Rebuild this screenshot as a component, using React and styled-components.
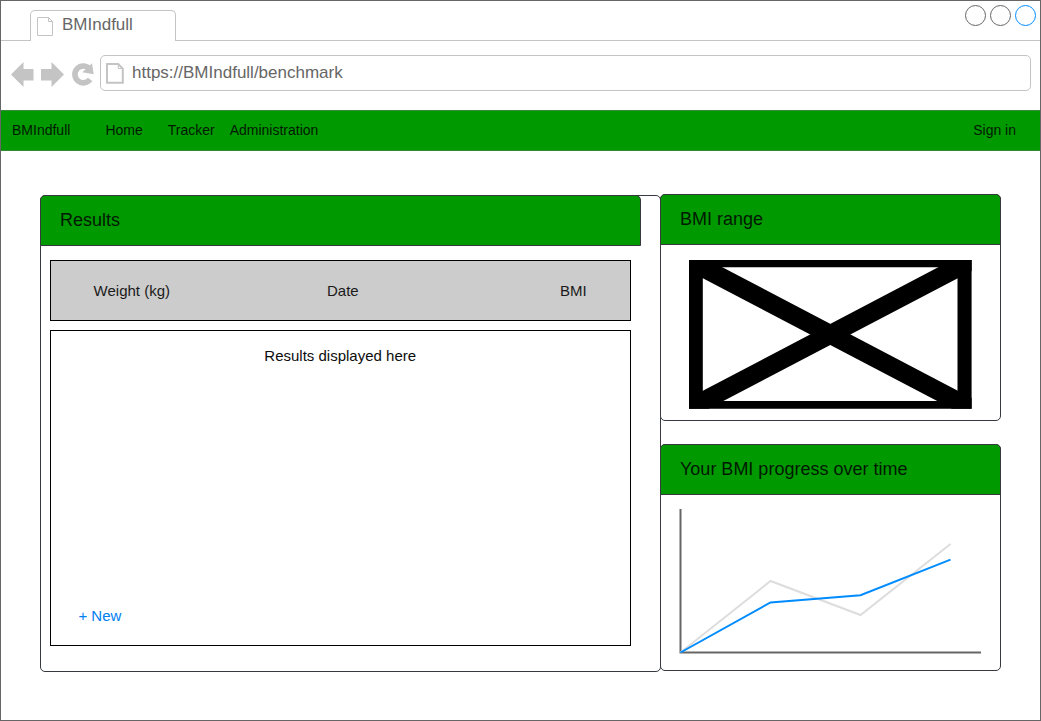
import React from 'react';
import styled, { createGlobalStyle } from 'styled-components';

const GlobalStyle = createGlobalStyle`
  *, *::before, *::after { box-sizing: border-box; }
  body { margin: 0; background: #fff; font-family: "Liberation Sans", Arial, sans-serif; }
  svg { display: block; flex: none; }
`;

const BrowserWindow = styled.div`
  width: 1041px;
  height: 721px;
  border: 1px solid #666;
  background: #fff;
  display: flex;
  flex-direction: column;
  overflow: hidden;
`;

const TabStrip = styled.header`
  height: 40px;
  flex: none;
  display: flex;
  align-items: flex-end;
  padding: 0 4px 0 29px;
  border-bottom: 1px solid #c4c4c4;
`;

const Tab = styled.div`
  width: 146px;
  height: 31px;
  margin-bottom: -1px;
  padding: 6px 0 0 6px;
  display: flex;
  gap: 8px;
  border: 1px solid #c4c4c4;
  border-bottom: none;
  border-radius: 5px 5px 0 0;
  background: #fff;
  color: #666;
  font-size: 17px;
  line-height: 20px;
`;

const TabTitle = styled.span`
  margin-top: -2px;
`;

const WindowControls = styled.div`
  display: flex;
  gap: 4px;
  margin-left: auto;
  align-self: flex-start;
  padding-top: 4px;
`;

const Control = styled.span`
  width: 21px;
  height: 21px;
  border-radius: 50%;
  border: 1px solid ${({ $color }) => $color};
`;

const Toolbar = styled.div`
  height: 69px;
  flex: none;
  display: flex;
  align-items: flex-start;
  padding: 14px 9px 0 9px;
`;

const NavIcons = styled.div`
  display: flex;
  width: 90px;
  padding-top: 6px;
`;

const AddressBar = styled.div`
  flex: 1;
  height: 36px;
  display: flex;
  gap: 8px;
  padding: 7px 0 0 5px;
  border: 1px solid #c4c4c4;
  border-radius: 5px;
  color: #666;
  font-size: 17px;
  line-height: 20px;
`;

const Url = styled.span``;

const SiteNav = styled.nav`
  height: 41px;
  flex: none;
  display: flex;
  align-items: center;
  padding: 0 24px 2px 11px;
  background: #009900;
  border-top: 1px solid #338a33;
  border-bottom: 1px solid #338a33;
  color: #001a00;
  font-size: 14px;
`;

const NavLink = styled.a`
  width: ${({ $width }) => $width};
  margin-left: ${({ $push }) => ($push ? 'auto' : '0')};
`;

const Content = styled.main`
  flex: 1;
  display: flex;
  align-items: flex-start;
  padding: 43px 39px 0;
`;

const Panel = styled.section`
  width: ${({ $width }) => $width}px;
  height: ${({ $height }) => $height}px;
  flex: none;
  border: 1px solid #36393d;
  border-radius: 5px;
  background: #fff;
`;

const ResultsPanel = styled(Panel)`
  margin-top: 1px;
`;

const SidePanels = styled.div`
  display: flex;
  flex-direction: column;
  gap: 23px;
  margin-left: -1px;
`;

const PanelTitle = styled.h2`
  width: ${({ $width }) => $width}px;
  height: 51px;
  margin: -1px 0 0 -1px;
  padding: 0 0 1px 19px;
  display: flex;
  align-items: center;
  background: #009900;
  border: 1px solid #36393d;
  border-radius: 5px 5px 0 0;
  color: #001a00;
  font-size: 18px;
  font-weight: 400;
`;

const TableHead = styled.div`
  width: 581px;
  height: 61px;
  margin: 14px 0 0 9px;
  display: grid;
  grid-template-columns: 175px 233px 1fr;
  align-items: center;
  background: #ccc;
  border: 1px solid #000;
  color: #1a1a1a;
  font-size: 15px;
`;

const HeadCell = styled.span`
  padding-left: ${({ $inset }) => $inset}px;
`;

const TableBody = styled.div`
  width: 581px;
  height: 316px;
  margin: 9px 0 0 9px;
  padding: 16px 28px 20px 27.4px;
  display: flex;
  flex-direction: column;
  justify-content: space-between;
  border: 1px solid #000;
  color: #0d0d0d;
  font-size: 15px;
  line-height: 18px;
`;

const Message = styled.p`
  margin: 0;
  text-align: center;
`;

const NewLink = styled.a`
  color: #0080f0;
`;

const ImageArea = styled.div`
  padding: 15px 0 0 28px;
`;

const ChartArea = styled.div`
  padding: 14px 0 0 18px;
`;

const TabPageIcon = () => (
  <svg width="17" height="20" viewBox="0 0 17 20" fill="none" stroke="#c4c4c4">
    <path d="M.5.5H11.5L15.5 4.5V18.5H.5ZM11.5.5V4.5H15.5" />
  </svg>
);

const AddressPageIcon = () => (
  <svg width="18" height="21" viewBox="0 0 18 21" fill="none" stroke="#c4c4c4" strokeWidth="2">
    <path d="M1 1H12.2L16.8 5.6V19.8H1Z" />
    <path d="M12.3 1V5.5H16.5" strokeWidth="1" />
  </svg>
);

const BrowserIcons = () => (
  <svg width="86" height="28" viewBox="0 0 86 28" fill="#c4c4c4">
    <path d="M1 13.5 13.5 1V8H23.5V19.5H13.5V26Z" />
    <path d="M54 13.5 41.5 1V8H31V19.5H41.5V26Z" />
    <path d="M82 2.3 83.7 13.2 72.3 11.3Z" />
    <path d="M80.1 18.4A8.4 8.4 0 1 1 79.5 7.8" fill="none" stroke="#c4c4c4" strokeWidth="5.6" />
  </svg>
);

const ImagePlaceholder = () => (
  <svg width="283" height="149" viewBox="0 0 283 149">
    <path fillRule="evenodd" d="M0 0H282.6V148.7H0ZM13.8 7.3V141H268.5V7.3Z" />
    <path d="M0 0H19.5L282.6 138V148.7H263L0 11Z" />
    <path d="M282.6 0V11L19.5 148.7H0V138L263 0Z" />
  </svg>
);

const ProgressChart = () => (
  <svg width="304" height="148" viewBox="0 0 304 148" fill="none" strokeWidth="2">
    <path stroke="#666" d="M1.5 0V143.5H302" />
    <path stroke="#ddd" d="M1.5 143.5 91.5 72 181.5 106 271.5 35" />
    <path stroke="#008cff" d="M1.5 143.5 91.5 93.5 181.5 86.3 271.5 50.6" />
  </svg>
);

export default function App() {
  return (
    <>
      <GlobalStyle />
      <BrowserWindow>
        <TabStrip>
          <Tab>
            <TabPageIcon />
            <TabTitle>BMIndfull</TabTitle>
          </Tab>
          <WindowControls>
            <Control $color="#666" />
            <Control $color="#666" />
            <Control $color="#008cff" />
          </WindowControls>
        </TabStrip>
        <Toolbar>
          <NavIcons><BrowserIcons /></NavIcons>
          <AddressBar>
            <AddressPageIcon />
            <Url>https://BMIndfull/benchmark</Url>
          </AddressBar>
        </Toolbar>
        <SiteNav>
          <NavLink $width="93.4px">BMIndfull</NavLink>
          <NavLink $width="62.3px">Home</NavLink>
          <NavLink $width="62px">Tracker</NavLink>
          <NavLink $width="auto">Administration</NavLink>
          <NavLink $width="auto" $push>Sign in</NavLink>
        </SiteNav>
        <Content>
          <ResultsPanel $width={621} $height={477}>
            <PanelTitle $width={601}>Results</PanelTitle>
            <TableHead>
              <HeadCell $inset={42.6}>Weight (kg)</HeadCell>
              <HeadCell $inset={101}>Date</HeadCell>
              <HeadCell $inset={101}>BMI</HeadCell>
            </TableHead>
            <TableBody>
              <Message>Results displayed here</Message>
              <NewLink>+ New</NewLink>
            </TableBody>
          </ResultsPanel>
          <SidePanels>
            <Panel $width={341} $height={227}>
              <PanelTitle $width={341}>BMI range</PanelTitle>
              <ImageArea><ImagePlaceholder /></ImageArea>
            </Panel>
            <Panel $width={341} $height={227}>
              <PanelTitle $width={341}>Your BMI progress over time</PanelTitle>
              <ChartArea><ProgressChart /></ChartArea>
            </Panel>
          </SidePanels>
        </Content>
      </BrowserWindow>
    </>
  );
}
